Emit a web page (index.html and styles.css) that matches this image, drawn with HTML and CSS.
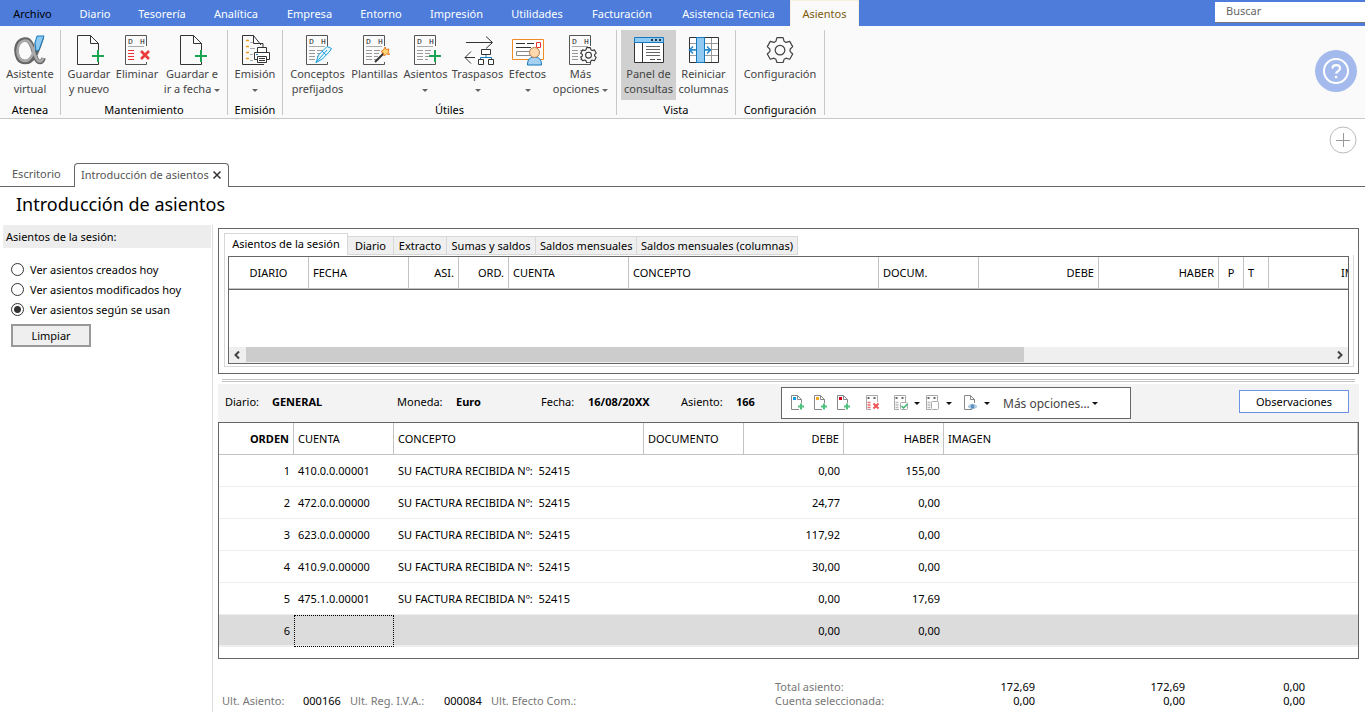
FILE: index.html
```html
<!DOCTYPE html>
<html lang="es">
<head>
<meta charset="utf-8">
<title>Introducción de asientos</title>
<link rel="stylesheet" href="styles.css">
</head>
<body>
<svg class="defs" aria-hidden="true">
  <symbol id="page" viewBox="0 0 32 32">
    <path d="M25.500 17V9.500L17.500 1.500H4.500V30.500H25.500V28M17.500 1.500V9.500H25.500" fill="none" stroke="#333"/>
  </symbol>
  <symbol id="ledger" viewBox="0 0 32 32">
    <path d="M25.500 12V1.500H4.500V30.500H25.500V28" fill="none" stroke="#555"/>
    <text class="dh" x="7" y="10">D</text><text class="dh" x="19" y="10">H</text>
    <path d="M7 12.500H23" stroke="#aaa"/>
  </symbol>
  <symbol id="greylines" viewBox="0 0 32 32">
    <path d="M7 16.500h6M7 19.500h6M7 22.500h6M7 25.500h6M15 16.500h6M15 19.500h5M15 22.500h4M15 25.500h3" stroke="#999"/>
  </symbol>
  <symbol id="plus" viewBox="0 0 32 32">
    <path d="M19 22H31M25 16V28" stroke="#1ba553" stroke-width="2"/>
  </symbol>
  <symbol id="gear" viewBox="0 0 32 32">
    <path d="M12.500 3h7l1.200 4.200 2.200 1.300 4.200-1.200 3.400 6-3 3v2.400l3 3-3.400 6-4.200-1.200-2.200 1.300-1.200 3.700h-7l-1.200-3.700-2.200-1.300-4.200 1.200-3.400-6 3-3v-2.400l-3-3 3.400-6 4.200 1.200 2.200-1.300z" stroke-linejoin="round"/>
    <circle cx="16" cy="17.300" r="5.500"/>
  </symbol>
  <symbol id="minipage" viewBox="0 0 16 18">
    <path d="M11.500 9V5.500L7.500 1.500H1.500V15.500H9M7.500 1.500V5.500H11.500" fill="none" stroke="#888"/>
  </symbol>
  <symbol id="miniplus" viewBox="0 0 16 18">
    <path d="M8 12.500H14M11 9.500V15.500" stroke="#4fc17e" stroke-width="2"/>
  </symbol>
  <symbol id="miniledger" viewBox="0 0 16 18">
    <path d="M12.500 8V1.500H1.500V15.500H6" fill="none" stroke="#aaa"/>
    <path d="M3.500 3v2M9.500 3v2" stroke="#666" stroke-width="2"/>
  </symbol>
</svg>

<nav class="menu">
  <a class="archivo" href="#">Archivo</a><a href="#">Diario</a><a href="#">Tesorería</a><a href="#">Analítica</a><a href="#">Empresa</a><a href="#">Entorno</a><a href="#">Impresión</a><a href="#">Utilidades</a><a href="#">Facturación</a><a href="#">Asistencia Técnica</a><a class="active" href="#">Asientos</a>
  <input class="search" type="search" aria-label="Buscar" placeholder="Buscar">
</nav>

<header class="ribbon">
  <section class="group atenea">
    <div class="tools">
      <button>
        <svg viewBox="0 0 32 32"><path d="M28 3C24 14 21 28 11 28C4.500 28 2.500 22 2.500 16.500C2.500 10 6 5.500 11.500 5.500C21 5.500 19 28 26 28C28 28 29 26 29.500 24" fill="none" stroke="#666" stroke-width="4.600"/><path d="M22 8C21 17 17 27 11 27C6 27 3.500 22 3.500 17C3.500 11 6.500 6.500 11.500 6.500C20 6.500 19.500 27.500 26 27.500C28 27.500 28.500 26 29 24" fill="none" stroke="#aaa" stroke-width="2.600"/><path d="M23 2H30L25 16L22 17L21 9Z" fill="#8ecaf2" stroke="#1679bd"/></svg>
        <span>Asistente<br>virtual</span></button>
    </div>
    <h2>Atenea</h2>
  </section>
  <section class="group mantenimiento">
    <div class="tools">
      <button><svg viewBox="0 0 32 32"><use href="#page"/><use href="#plus"/></svg><span>Guardar<br>y nuevo</span></button>
      <button><svg viewBox="0 0 32 32"><use href="#ledger"/><path d="M7 16.500h6M7 19.500h6M7 22.500h6M7 25.500h6" stroke="#e33"/><path d="M20 17l8 8M28 17l-8 8" stroke="#ea3a3a" stroke-width="2.600"/></svg><span>Eliminar</span></button>
      <button><svg viewBox="0 0 32 32"><use href="#page"/><use href="#plus"/></svg><span>Guardar e<br>ir a fecha <i class="caret"></i></span></button>
    </div>
    <h2>Mantenimiento</h2>
  </section>
  <section class="group emision">
    <div class="tools">
      <button><svg viewBox="0 0 32 32"><path d="M22 11L14.500 1.500H3.500V30.500H25M14.500 1.500V9.500H24V14" fill="none" stroke="#333"/><path d="M7 6.500h3M7 12.500h3M7 18.500h3M7 24.500h3" stroke="#f39a1b" stroke-width="1.500"/><path d="M11 8.500h3M11 14.500h5M11 20.500h3M11 26.500h3" stroke="#aaa"/><path d="M18.500 19V13.500H27.500V19M18 25.500H15.500V18.500H30.500V25.500H28M18.500 22.500H27.500V28.500H18.500ZM20 24.500h6M20 26.500h6" fill="#fff" stroke="#333"/><path d="M17 20.500h2" stroke="#1679bd"/></svg><span>Emisión<br><i class="caret"></i></span></button>
    </div>
    <h2>Emisión</h2>
  </section>
  <section class="group utiles">
    <div class="tools">
      <button><svg viewBox="0 0 32 32"><use href="#ledger"/><use href="#greylines"/><path d="M14 28.500L16.500 21L25 12.500L29.500 14.500L28 17L20.500 25ZM14 28.500L25 16M20 17L24 21" fill="#e9f6fe" stroke="#1ba1e2"/></svg><span>Conceptos<br>prefijados</span></button>
      <button><svg viewBox="0 0 32 32"><use href="#ledger"/><use href="#greylines"/><path d="M16 28L25 19" stroke="#333" stroke-width="2"/><path d="M26 13l1 2.500 3-.500-1 3 1.500 2.500-3-.500-2.500 2-.500-3-2.500-1.500 2.500-1.500z" fill="#ffd67a" stroke="#e87b22"/></svg><span>Plantillas</span></button>
      <button><svg viewBox="0 0 32 32"><use href="#ledger"/><use href="#greylines"/><use href="#plus"/></svg><span>Asientos<br><i class="caret"></i></span></button>
      <button><svg viewBox="0 0 32 32"><path d="M4 8.500H30M24 2.500l6.500 6L24 14.500M13 23.500H3M9 17.500L3 23.500L9 29.500" fill="none" stroke="#333"/><path d="M24 21v3M18.500 26v-2.500h11V26" fill="none" stroke="#1679bd"/><path d="M19.500 15.500h9v5h-9zM16.500 25.500h5v5h-5zM26.500 25.500h5v5h-5z" fill="#fff" stroke="#333"/></svg><span>Traspasos<br><i class="caret"></i></span></button>
      <button><svg viewBox="0 0 32 32"><path d="M.500 5.500h31v20H.500z" fill="#fff" stroke="#f08a24"/><path d="M4 9.500h9M15 9.500h7M4 13.500h15" stroke="#333"/><path d="M4.500 17.500h14v4h-14z" fill="none" stroke="#888"/><path d="M24.500 8.500h4v5h-4z" fill="none" stroke="#e33"/><path d="M15.500 31C15.500 25 18 23 22.500 23S29.500 25 29.500 31Z" fill="#a4d0f2" stroke="#1679bd"/><circle cx="22.500" cy="18.500" r="5" fill="#ffd9ae" stroke="#b57a4a"/></svg><span>Efectos<br><i class="caret"></i></span></button>
      <button><svg viewBox="0 0 32 32"><use href="#ledger"/><use href="#greylines"/><use class="gear" href="#gear" x="15" y="12" width="17" height="17"/></svg><span>Más<br>opciones <i class="caret"></i></span></button>
    </div>
    <h2>Útiles</h2>
  </section>
  <section class="group vista">
    <div class="tools">
      <button class="pressed"><svg viewBox="0 0 32 32"><path d="M1.500 8.500h29v20h-29z" fill="#fff" stroke="#333"/><path d="M9.500 8v20" stroke="#333"/><path d="M1.500 3.500h29v5h-29z" fill="#90caf2" stroke="#1679bd"/><path d="M18 6h2M22 6h2M26 6h2" stroke="#333" stroke-width="2"/><path d="M13 12.500h14M13 15.500h14M13 18.500h14M13 21.500h14" stroke="#666"/><path d="M17 25.500h5M24 25.500h4" stroke="#555"/></svg><span>Panel de<br>consultas</span></button>
      <button><svg viewBox="0 0 32 32"><path d="M1.500 3.500h29v25h-29z" fill="#fff" stroke="#333"/><path d="M2 9.500h28M2 15.500h28M2 21.500h28M23.500 4v24" stroke="#999"/><path d="M8.500 3.500h8v25h-8z" fill="#90caf2" stroke="#1679bd"/><path d="M8 16H2M5 12.500L1.500 16L5 19.500M16 16h6M19 12.500L22.500 16L19 19.500" fill="none" stroke="#2187cc" stroke-width="1.500"/></svg><span>Reiniciar<br>columnas</span></button>
    </div>
    <h2>Vista</h2>
  </section>
  <section class="group config">
    <div class="tools">
      <button><svg viewBox="0 0 32 32"><use class="gear big" href="#gear" x="2" y="1" width="28" height="28"/></svg><span>Configuración</span></button>
    </div>
    <h2>Configuración</h2>
  </section>
  <button class="help" aria-label="Ayuda"><svg viewBox="0 0 42 42"><circle cx="21" cy="21" r="12" fill="none" stroke="#fff" stroke-width="2"/><path d="M17.500 18.500C17.500 14 25 14 25 18.500C25 21 21.500 21 21 23.500" fill="none" stroke="#fff" stroke-width="2.200"/><circle cx="21" cy="27" r="1.300" fill="#fff"/></svg></button>
</header>

<div class="addrow"><button class="add" aria-label="Añadir"><svg viewBox="0 0 28 28"><circle cx="14" cy="14" r="13" fill="#fff" stroke="#bbb"/><path d="M7 14.500H21M14.500 7V21" stroke="#999"/></svg></button></div>

<nav class="pages">
  <a class="pagetab" href="#">Escritorio</a>
  <div class="pagetab current"><a href="#">Introducción de asientos</a><button aria-label="Cerrar"><svg viewBox="0 0 10 10"><path d="M1.500 1.500L8.500 8.500M8.500 1.500L1.500 8.500" stroke="#333" stroke-width="1.500"/></svg></button></div>
</nav>

<h1>Introducción de asientos</h1>

<div class="body">
  <aside>
    <h3>Asientos de la sesión:</h3>
    <form>
      <label><input type="radio" name="ver">Ver asientos creados hoy</label>
      <label><input type="radio" name="ver">Ver asientos modificados hoy</label>
      <label><input type="radio" name="ver" checked>Ver asientos según se usan</label>
      <button type="button" class="clear">Limpiar</button>
    </form>
  </aside>

  <main>
    <section class="session">
      <div class="subtabs"><button class="on">Asientos de la sesión</button><button>Diario</button><button>Extracto</button><button>Sumas y saldos</button><button>Saldos mensuales</button><button>Saldos mensuales (columnas)</button></div>
      <div class="tabpage">
        <div class="gridbox">
          <table class="grid top">
            <colgroup><col class="w80"><col class="w100"><col class="w50"><col class="w50"><col class="w120"><col class="w250"><col class="w100"><col class="w120"><col class="w120"><col class="w25"><col class="w25"><col class="w120"></colgroup>
            <thead><tr><th class="c">DIARIO</th><th>FECHA</th><th class="r">ASI.</th><th class="r">ORD.</th><th>CUENTA</th><th>CONCEPTO</th><th>DOCUM.</th><th class="r">DEBE</th><th class="r">HABER</th><th class="c">P</th><th>T</th><th class="r">IMAGEN</th></tr></thead>
          </table>
          <div class="hscroll"><svg viewBox="0 0 16 16"><path d="M10 4.500L6.500 8L10 11.500" fill="none" stroke="#444" stroke-width="2"/></svg><div class="track"><div class="thumb"></div></div><svg viewBox="0 0 16 16"><path d="M6 4.500L9.500 8L6 11.500" fill="none" stroke="#444" stroke-width="2"/></svg></div>
        </div>
      </div>
    </section>
    <div class="splitter"></div>
    <section class="entrybar">
      <dl>
        <div><dt>Diario:</dt><dd>GENERAL</dd></div>
        <div><dt>Moneda:</dt><dd>Euro</dd></div>
        <div><dt>Fecha:</dt><dd>16/08/20XX</dd></div>
        <div><dt>Asiento:</dt><dd>166</dd></div>
      </dl>
      <div class="toolbar">
        <button aria-label="Insertar línea"><svg viewBox="0 0 16 18"><use href="#minipage"/><path d="M3 3h3v3h-3z" fill="#169be0"/><use href="#miniplus"/></svg></button>
        <button aria-label="Insertar apunte"><svg viewBox="0 0 16 18"><use href="#minipage"/><path d="M3 3h3v3h-3z" fill="#f5a623"/><use href="#miniplus"/></svg></button>
        <button aria-label="Insertar asiento"><svg viewBox="0 0 16 18"><use href="#minipage"/><path d="M3 3h3v3h-3z" fill="#d0021b"/><use href="#miniplus"/></svg></button>
        <button class="gap" aria-label="Eliminar línea"><svg viewBox="0 0 16 18"><use href="#miniledger"/><path d="M2.500 8.500h3M2.500 11h3M2.500 13.500h3" stroke="#ef6a6a" stroke-width="1.500"/><path d="M8.500 9.500l5 5M13.500 9.500l-5 5" stroke="#ef5555" stroke-width="2"/></svg></button>
        <button class="drop gap" aria-label="Punteo"><svg viewBox="0 0 16 18"><use href="#miniledger"/><path d="M2.500 8.500h3M2.500 11h3M2.500 13.500h3" stroke="#bbb" stroke-width="1.500"/><rect x="7.500" y="8.500" width="7" height="7" rx="1" fill="#fff" stroke="#aaa"/><path d="M8.500 12l2 2 4-4" fill="none" stroke="#3cb56c" stroke-width="1.500"/></svg><i class="caret dark"></i></button>
        <button class="drop" aria-label="Marcas"><svg viewBox="0 0 16 18"><use href="#miniledger"/><path d="M2.500 8.500h3M2.500 11h3M2.500 13.500h3" stroke="#bbb" stroke-width="1.500"/><rect x="6.500" y="7.500" width="7" height="8" rx="1" fill="#fff" stroke="#aaa"/></svg><i class="caret dark"></i></button>
        <button class="drop view" aria-label="Ver documento"><svg viewBox="0 0 16 18"><use href="#minipage"/><path d="M5 12.500Q9.500 8 14 12.500Q9.500 17 5 12.500Z" fill="#c9dff0" stroke="#9bbcd6"/><circle cx="9.500" cy="12.500" r="2" fill="#5a8fc0"/></svg><i class="caret dark"></i></button>
        <button class="more">Más opciones... <i class="caret dark"></i></button>
      </div>
      <button class="obs">Observaciones</button>
    </section>
    <div class="entries">
      <table class="grid">
        <colgroup><col class="w75"><col class="w100"><col class="w250"><col class="w100"><col class="w100"><col class="w100"><col></colgroup>
        <thead><tr><th class="r b">ORDEN</th><th>CUENTA</th><th>CONCEPTO</th><th>DOCUMENTO</th><th class="r">DEBE</th><th class="r">HABER</th><th>IMAGEN</th></tr></thead>
        <tbody>
          <tr><td class="r">1</td><td>410.0.0.00001</td><td>SU FACTURA RECIBIDA Nº:&nbsp; 52415</td><td></td><td class="r">0,00</td><td class="r">155,00</td><td></td></tr>
          <tr><td class="r">2</td><td>472.0.0.00000</td><td>SU FACTURA RECIBIDA Nº:&nbsp; 52415</td><td></td><td class="r">24,77</td><td class="r">0,00</td><td></td></tr>
          <tr><td class="r">3</td><td>623.0.0.00000</td><td>SU FACTURA RECIBIDA Nº:&nbsp; 52415</td><td></td><td class="r">117,92</td><td class="r">0,00</td><td></td></tr>
          <tr><td class="r">4</td><td>410.9.0.00000</td><td>SU FACTURA RECIBIDA Nº:&nbsp; 52415</td><td></td><td class="r">30,00</td><td class="r">0,00</td><td></td></tr>
          <tr><td class="r">5</td><td>475.1.0.00001</td><td>SU FACTURA RECIBIDA Nº:&nbsp; 52415</td><td></td><td class="r">0,00</td><td class="r">17,69</td><td></td></tr>
          <tr class="sel"><td class="r">6</td><td class="focus"></td><td></td><td></td><td class="r">0,00</td><td class="r">0,00</td><td></td></tr>
        </tbody>
      </table>
    </div>
    <footer>
      <dl class="last">
        <dt>Ult. Asiento:</dt><dd>000166</dd>
        <dt>Ult. Reg. I.V.A.:</dt><dd>000084</dd>
        <dt>Ult. Efecto Com.:</dt>
      </dl>
      <dl class="totals">
        <dt>Total asiento:</dt><dd>172,69</dd><dd>172,69</dd><dd>0,00</dd>
        <dt>Cuenta seleccionada:</dt><dd>0,00</dd><dd>0,00</dd><dd>0,00</dd>
      </dl>
    </footer>
  </main>
</div>
</body>
</html>
```
FILE: styles.css
```css
* { box-sizing: border-box; }
body { margin: 0; min-height: 100vh; display: flex; flex-direction: column; background: #fff; color: #000; font: 11px/15px "Noto Sans", "Open Sans", sans-serif; }
button { margin: 0; padding: 0; border: 0; background: none; color: inherit; font: inherit; }
a { color: inherit; text-decoration: none; }
h1, h2, h3, dl, dd, dt { margin: 0; font-weight: normal; }
svg { display: block; }
.defs { display: none; }
.dh { font: 8px "Liberation Mono", monospace; fill: #222; }

.menu { display: grid; grid-template-columns: 65px 60px 74px 74px 73px 70px 81px 80px 90px 123px 69px 1fr 150px; height: 26px; background: #4d7cdb; color: #fff; text-align: center; line-height: 27px; }
.menu a { border-bottom: 1px solid #c8c8c8; white-space: nowrap; }
.menu .archivo { color: #000; border-bottom-color: #4d7cdb; }
.menu .active { background: #fafafa; color: #7d5a0b; border: 1px solid #f5f0dc; border-bottom: 0; line-height: 25px; }
.search { grid-column: 13; height: 21px; margin: 2px 0 0; padding: 0 11px 3px; border: 0; border-bottom: 1px solid #777; border-radius: 0; background: #fff; font: inherit; line-height: 17px; }
.search::placeholder { color: #666; opacity: 1; }

.ribbon { display: flex; height: 93px; padding-top: 4px; background: #fafafa; border-bottom: 1px solid #c8c8c8; }
.group { display: flex; flex-direction: column; height: 85px; border-right: 1px solid #c8c8c8; }
.tools { display: grid; flex: 1; justify-content: center; }
.tools button { display: flex; flex-direction: column; align-items: center; height: 70px; padding-top: 4px; color: #444; }
.tools svg { width: 32px; height: 32px; }
.tools span { white-space: nowrap; }
.group h2 { height: 12px; font-size: 11px; line-height: 14px; text-align: center; }
.atenea { width: 61px; } .atenea .tools { grid-template-columns: 58px; }
.mantenimiento { width: 167px; } .mantenimiento .tools { grid-template-columns: 48px 48px 62px; }
.emision { width: 55px; } .emision .tools { grid-template-columns: 50px; }
.utiles { width: 334px; } .utiles .tools { grid-template-columns: 60px 54px 48px 56px 44px 62px; }
.vista { width: 119px; } .vista .tools { grid-template-columns: 55px 55px; }
.config { width: 89px; } .config .tools { grid-template-columns: 80px; }
.pressed { background: #d0d0d0; }
.gear { fill: #fafafa; stroke: #333; stroke-width: 2; }
.gear.big { stroke: #444; stroke-width: 1.400; }
.caret { display: inline-block; border: 3px solid transparent; border-top-color: #666; border-bottom: 0; vertical-align: middle; }
.caret.dark { border-top-color: #111; }
.help { width: 42px; height: 42px; margin: 20px 8px 0 auto; border-radius: 50%; background: #a4baec; }

.addrow { display: flex; justify-content: flex-end; height: 44px; padding: 7px 8px 0; }
.add { width: 28px; height: 28px; }

.pages { display: flex; height: 24px; border-bottom: 1px solid #666; color: #555; line-height: 22px; }
.pages > .pagetab:first-child { width: 74px; padding-left: 12px; }
.pagetab.current { display: flex; align-items: center; gap: 3px; height: 24px; padding: 0 6px 2px; background: #fff; border: 1px solid #666; border-bottom: 0; border-radius: 4px 4px 0 0; }
.pagetab button { width: 10px; height: 10px; }
h1 { padding: 2px 16px 0; height: 38px; font-size: 18px; line-height: 30px; }

.body { display: flex; flex: 1; }
aside { width: 213px; flex: none; border-right: 1px solid #ddd; }
aside h3 { margin: 0 1px 0 3px; height: 23px; padding-left: 3px; background: #ededed; font-size: 11px; line-height: 24px; }
form { display: flex; flex-direction: column; align-items: flex-start; padding: 11px 11px; }
form label { display: flex; align-items: center; gap: 6px; height: 20px; }
form input { appearance: none; width: 13px; height: 13px; margin: 0; border: 1px solid #333; border-radius: 50%; background: #fff; }
form input:checked { background: radial-gradient(circle, #333 0 3px, #fff 4px); }
.clear { width: 80px; height: 23px; margin-top: 5px; border: 2px solid #999; background: #efefef; }

main { flex: 1; min-width: 0; padding: 3px 6px 0 5px; }
.session { border: 1px solid #666; padding: 4px 4px 6px 5px; }
.subtabs { display: grid; grid-template-columns: 124px 46px 53px 89px 101px 161px; align-items: end; height: 22px; }
.subtabs button { height: 19px; padding: 0 4px; background: #efefef; border: 1px solid #d8d8d8; border-width: 1px 1px 1px 0; line-height: 17px; text-align: center; white-space: nowrap; }
.subtabs button.on { height: 22px; padding: 0 7px 2px; border-width: 1px 1px 0; background: #fff; }
.tabpage { border: 1px solid #d8d8d8; border-top: 0; padding: 1px 4px 2px 3px; }
.gridbox { overflow: hidden; border: 1px solid #666; }
.grid { width: 100%; table-layout: fixed; border-collapse: separate; border-spacing: 0; font-size: 11px; }
.grid.top { width: 1160px; border-bottom: 1px solid #666; }
.grid th, .grid td { height: 32px; padding: 0 4px; text-align: left; font-weight: normal; white-space: nowrap; border-bottom: 1px solid #eee; }
.grid th { border-right: 1px solid #c3c3c3; border-bottom-color: #c3c3c3; }
.grid .r { text-align: right; } .grid .c { text-align: center; } .grid .b { font-weight: bold; }
.w25 { width: 25px; } .w50 { width: 50px; } .w75 { width: 75px; } .w80 { width: 80px; } .w100 { width: 100px; } .w120 { width: 120px; } .w250 { width: 250px; }
.hscroll { display: flex; height: 16px; margin-top: 57px; background: #efefef; }
.hscroll svg { width: 16px; height: 16px; flex: none; }
.track { flex: 1; padding-left: 1px; } .thumb { width: 71.600%; height: 15px; background: #ccc; }
.splitter { height: 3px; margin: 5px 4px 2px; border: 1px solid #c3c3c3; border-width: 1px 0; }

.entrybar { display: flex; align-items: center; height: 38px; padding: 0 10px 0 7px; background: #f3f3f3; }
.entrybar dl { display: grid; grid-template-columns: 172px 144px 140px 100px; padding-bottom: 3px; }
.entrybar dl div { display: flex; }
.entrybar dt { width: 47px; }
.entrybar div:nth-child(2) dt { width: 59px; }
.entrybar div:nth-child(4) dt { width: 55px; }
.entrybar dd { font-weight: bold; }
.toolbar { display: flex; align-items: center; width: 350px; height: 32px; padding-left: 8px; border: 1px solid #666; background: #fff; }
.toolbar button { display: flex; align-items: center; width: 23px; }
.toolbar svg { width: 16px; height: 18px; flex: none; }
.toolbar .gap { margin-left: 6px; }
.toolbar .drop { width: 32px; gap: 5px; }
.toolbar .gap.drop { margin-left: 5px; }
.toolbar .drop.view { margin-left: 6px; width: 40px; }
.toolbar .more { width: auto; gap: 2px; color: #444; font-size: 12px; }
.obs { width: 110px; height: 23px; margin: 0 0 3px auto; border: 1px solid #6c93e3; background: #fff; }

.entries { height: 237px; border: 1px solid #666; }
.sel td { background: #dcdcdc; border-bottom-width: 2px; }
.sel .focus { outline: 1px dotted #000; outline-offset: -1px; }

footer { display: flex; justify-content: space-between; padding: 21px 54px 0 4px; }
footer dl { display: grid; line-height: 14px; }
footer dt { color: #777; }
.last { grid-template-columns: 81px 47px 94px 47px auto; align-content: end; }
.totals { grid-template-columns: 160px 100px 150px 120px; }
.totals dd { text-align: right; }
```
